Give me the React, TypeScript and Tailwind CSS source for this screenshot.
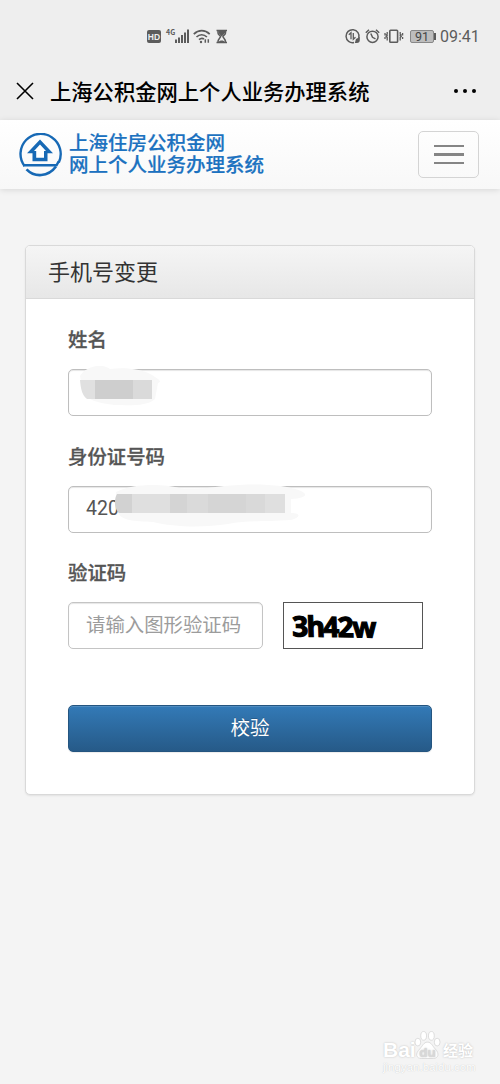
// src/App.tsx
import type { ReactNode } from "react";

const StatusBar = () => (
  <div className="flex h-[60px] items-start pt-7 pl-[147px] text-[#5c5c5c]">
    <svg width="15" height="17" viewBox="0 0 15 17">
      <rect x="0" y="2" width="14" height="13" rx="2" fill="#5c5c5c" />
      <text x="7" y="11.7" textAnchor="middle" fontSize="8.5" fontWeight="700" fontFamily="Liberation Sans, sans-serif" fill="#eee">
        HD
      </text>
    </svg>
    <span className="ml-1 w-[9px] text-[7px] leading-[9px] font-bold">4G</span>
    <svg width="15" height="17" viewBox="0 0 15 17" fill="currentColor">
      <rect x="0" y="11.5" width="2" height="3.5" />
      <rect x="3" y="9.5" width="2" height="5.5" />
      <rect x="6" y="7" width="2" height="8" />
      <rect x="9" y="4.5" width="2" height="10.5" />
      <rect x="12" y="1.5" width="2" height="13.5" />
    </svg>
    <svg width="18" height="17" viewBox="0 0 18 17" fill="none" stroke="currentColor" strokeWidth="1.7" className="ml-[3px]">
      <path d="M.8 6.2c4.7-4.7 11.2-4.7 15.9 0M3.5 9c3-3 7.4-3 10.4 0M6 11.6c1.7-1.5 3.4-1.7 5-.6" />
      <circle cx="8" cy="14" r="1.2" fill="currentColor" stroke="none" />
      <path d="M12.3 11.3v3.5m3-3.5v3.5" strokeWidth="1.5" />
    </svg>
    <svg width="12" height="17" viewBox="0 0 12 17" fill="none" stroke="currentColor" strokeWidth="1.5" className="ml-[5px]">
      <path d="M.5 2.5h10.5M.5 14.5h10.5" />
      <path d="M2 3v2c0 2 2.6 2.5 2.6 3.5S2 10.5 2 14M9.5 3v2c0 2-2.6 2.5-2.6 3.5s2.6 2 2.6 5.5" />
      <path d="M2.5 3h6.5v2L5.7 8.5 2.5 5zM3 14c0-2 5.5-2 5.5 0z" fill="currentColor" stroke="none" />
    </svg>

    <svg width="16" height="17" viewBox="0 0 16 17" fill="none" stroke="currentColor" strokeWidth="1.5" className="ml-[117px]">
      <path d="M9 14.5A6.5 6.5 0 1 1 13.8 10" />
      <path d="M3.8 6.8 6 4.8v6.5M8.3 5v6.3l2.2-2" strokeWidth="1.3" />
      <path d="M14.8 9v3a3 3 0 0 1-3 3h-2l1.2-4z" fill="currentColor" stroke="none" />
    </svg>
    <svg width="16" height="17" viewBox="0 0 16 17" fill="none" stroke="currentColor" strokeWidth="1.5" className="ml-1">
      <circle cx="7.5" cy="8.8" r="5.6" />
      <path d="M.8 4.8 4 1.8M14.2 4.8 11 1.8M5.8 5.5l1.7 3.8 3 1.5" />
    </svg>
    <svg width="20" height="17" viewBox="0 0 20 17" fill="none" stroke="currentColor" strokeWidth="1.6" className="ml-[3px]">
      <rect x="5.8" y="2.3" width="7.8" height="12" rx=".8" />
      <path d="M3.2 4v2.2l-1 .8 1 .8-1 .8 1 .8v3M1 5v2.5M1 9v2M16.2 4v2.2l1 .8-1 .8 1 .8-1 .8v3M18.6 5v2.5M18.6 9v2" strokeWidth="1.3" />
    </svg>
    <div className="mt-0.5 ml-1.5 flex items-center">
      <div className="h-[13px] w-6 rounded-[2px] border border-[#888] bg-[#bdbdbd] text-center font-['Roboto',sans-serif] text-[12.5px] leading-[12px] text-[#444]">
        91
      </div>
      <div className="h-[7px] w-[2px] bg-[#5c5c5c]" />
    </div>
    <span className="ml-1 font-['Roboto',sans-serif] text-[16px] leading-[18px]">09:41</span>
  </div>
);

const TitleBar = () => (
  <div className="flex h-[60px] items-center pt-px pl-4 text-black">
    <svg width="18" height="18" viewBox="0 0 18 18" fill="none" stroke="currentColor" strokeWidth="1.6">
      <path d="M1 1l16 16M17 1 1 17" />
    </svg>
    <h1 className="ml-4 pt-px text-[21.3px] leading-[28px] font-medium whitespace-nowrap">上海公积金网上个人业务办理系统</h1>
    <div className="ml-[85px] flex gap-[5px]">
      <i className="size-1 rounded-full bg-black" />
      <i className="size-1 rounded-full bg-black" />
      <i className="size-1 rounded-full bg-black" />
    </div>
  </div>
);

const Navbar = () => (
  <nav className="flex h-[69px] items-center justify-between bg-gradient-to-b from-white to-[#f8f8f8] pr-[21px] pl-[18px] shadow-[0_1px_6px_rgba(0,0,0,0.12)]">
    <div className="flex items-center">
      <svg width="44" height="44" viewBox="0 0 44 44" fill="none" stroke="#1769b5">
        <path d="M6.5 33A20.1 20.1 0 1 1 40.8 29.5" strokeWidth="2.4" />
        <path d="M5 32.3h33.5l2.200-4" strokeWidth="2.4" />
        <path d="M8.5 36.3C16.5 44.5 30 44.3 38 33.5" strokeWidth="2.6" />
        <path d="M22 6.500 35 20.200h-5.500v8H14.500v-8H9z" fill="#1769b5" stroke="none" />
        <path d="M22 11.500 28 18h-2v6.800h-7.800V18H16z" fill="#fff" stroke="none" />
      </svg>
      <div className="-mt-[3px] ml-[7px] text-[19.5px] font-medium whitespace-nowrap text-[#1c72c0] [-webkit-text-stroke:0.2px_#1c72c0]">
        <p className="leading-[22px]">上海住房公积金网</p>
        <p className="leading-[22px]">网上个人业务办理系统</p>
      </div>
    </div>
    <button className="flex h-[47px] w-[61px] flex-col items-center justify-center gap-[6px] rounded-[5px] border border-[#d4d4d4]">
      <span className="h-[2.5px] w-[30px] bg-[#858585]" />
      <span className="h-[2.5px] w-[30px] bg-[#858585]" />
      <span className="h-[2.5px] w-[30px] bg-[#858585]" />
    </button>
  </nav>
);

const Field = ({ label, children }: { label: string; children: ReactNode }) => (
  <div>
    <label className="block h-[29px] text-[19.4px] leading-[26px] font-medium text-[#555] [-webkit-text-stroke:0.3px_#555]">
      {label}
    </label>
    <div className="mt-[14px] flex">{children}</div>
  </div>
);

const Watermark = () => (
  <div className="mt-auto mr-[26px] mb-[10px] w-[91px] self-end text-white">
    <div className="flex h-[31px] items-end font-['Liberation_Sans',sans-serif] [text-shadow:0_0_2px_#bbb]">
      <span className="w-[31px] text-[21px] leading-[22px] font-bold">Bai</span>
      <svg width="27" height="31" viewBox="0 0 28 31" className="shrink-0">
        <g fill="#fff" stroke="#d4d4d4" strokeWidth="0.8">
          <ellipse cx="4" cy="12" rx="3" ry="4" />
          <ellipse cx="10" cy="5.5" rx="3" ry="4.5" />
          <ellipse cx="18" cy="5.5" rx="3" ry="4.5" />
          <ellipse cx="24" cy="12" rx="3" ry="4" />
          <path d="M14 12c4 0 5 4 8 7 5 5 3 10-2 10H8c-6 0-7-5-2-10 3-3 4-7 8-7z" />
        </g>
        <text x="14" y="27" textAnchor="middle" fontSize="14" fontWeight="700" fontFamily="Liberation Sans, sans-serif" fill="#d8d8d8">
          du
        </text>
      </svg>
      <span className="ml-0.5 font-['Noto_Sans_CJK_SC',sans-serif] text-[15px] leading-[22px] font-bold whitespace-nowrap">经验</span>
    </div>
    <p className="font-['Liberation_Sans',sans-serif] text-[11.5px] leading-[13px] [text-shadow:0_0_1px_#bbb]">jingyan.baidu.com</p>
  </div>
);

const App = () => {
  return (
    <div className="flex min-h-[1084px] w-[500px] flex-col bg-[#f4f4f4] font-['Noto_Sans_CJK_SC',sans-serif]">
      <header className="bg-[#eeeeee]">
        <StatusBar />
        <TitleBar />
      </header>
      <Navbar />

      <main className="mx-[25px] mt-[56px] h-[550px] overflow-hidden rounded-[5px] border border-[#d9d9d9] bg-white shadow-[0_1px_2px_rgba(0,0,0,0.08)]">
        <h2 className="h-[53px] border-b border-[#d9d9d9] bg-gradient-to-b from-[#f5f5f5] to-[#e7e7e7] pl-[22px] text-[22px] leading-[48px] text-[#333]">
          手机号变更
        </h2>

        <form className="flex flex-col gap-[26.5px] px-[42px] pt-[27px]">
          <Field label="姓名">
            <div className="relative h-[47px] w-full rounded-[5px] border border-[#bebebe] shadow-[inset_0_1px_1px_rgba(0,0,0,0.1)]">
              <svg width="84" height="44" viewBox="0 0 84 44" className="absolute -top-1 left-[9px]">
                <path d="M2 10C8 0 24-3 32 3c14-2 33 0 42 6 8 5 10 7 6 8l-3 16c-8 8-28 6-41 6-13-2-27-4-31-13z" fill="#f8f8f8" />
                <path d="M2 14h16v19H9C4 29 3 24 2 14z" fill="#e0e0e0" />
                <path d="M17 14h38v19H17z" fill="#cecece" />
                <path d="M55 14h19v19H55z" fill="#dadada" />
              </svg>
            </div>
          </Field>

          <Field label="身份证号码">
            <div className="relative h-[47px] w-full rounded-[5px] border border-[#bebebe] pl-[17px] font-['Roboto',sans-serif] text-[19.5px] leading-[43px] text-[#555] shadow-[inset_0_1px_1px_rgba(0,0,0,0.1)]">
              420
              <svg width="200" height="44" viewBox="0 0 200 44" className="absolute -top-[3px] left-[45px]">
                <path d="M2 8C20-1 50 0 65 4c15 2 28 0 45-2 28-3 62-2 77 5 8 4 4 7-10 8v14c10 0 10 4 0 7-28 2-44 0-63 4-25 4-55 3-75-2C20 37 7 37 4 28z" fill="#f8f8f8" />
                <path d="M3 10h15v19H5C0 25 0 15 3 10z" fill="#d2d2d2" />
                <path d="M18 10h38v19H18z" fill="#dfdfdf" />
                <path d="M56 10h17v19H56z" fill="#d4d4d4" />
                <path d="M73 10h21v19H73z" fill="#dadada" />
                <path d="M94 10h38v19H94z" fill="#d5d5d5" />
                <path d="M132 10h19v19h-19z" fill="#d9d9d9" />
                <path d="M151 10h20v19h-20z" fill="#dfdfdf" />
              </svg>
            </div>
          </Field>

          <Field label="验证码">
            <input
              className="h-[47px] w-[195px] rounded-[5px] border border-[#c4c4c4] pr-0 pb-1 pl-[17px] text-[19.4px] text-[#555] shadow-[inset_0_1px_1px_rgba(0,0,0,0.1)] outline-none placeholder:text-[#9c9c9c]"
              placeholder="请输入图形验证码"
            />
            <div className="ml-5 h-[47px] w-[140px] border border-[#555] pl-[8px] text-black">
              <span className="block w-[84px] skew-x-3 rotate-1 font-['Noto_Sans',sans-serif] text-[28px] leading-[46px] font-bold tracking-[-1.5px] [-webkit-text-stroke:1.2px_#000]">
                3h42w
              </span>
            </div>
          </Field>

          <button
            type="button"
            className="mt-[29.5px] h-[47px] rounded-[5px] border border-[#245580] bg-gradient-to-b from-[#337ab7] to-[#265a88] pb-1 text-[19.5px] leading-[41px] text-white shadow-[inset_0_1px_0_rgba(255,255,255,0.15),0_1px_1px_rgba(0,0,0,0.075)] [text-shadow:0_-1px_0_rgba(0,0,0,0.2)]"
          >
            校验
          </button>
        </form>
      </main>

      <Watermark />
    </div>
  );
};

export default App;
